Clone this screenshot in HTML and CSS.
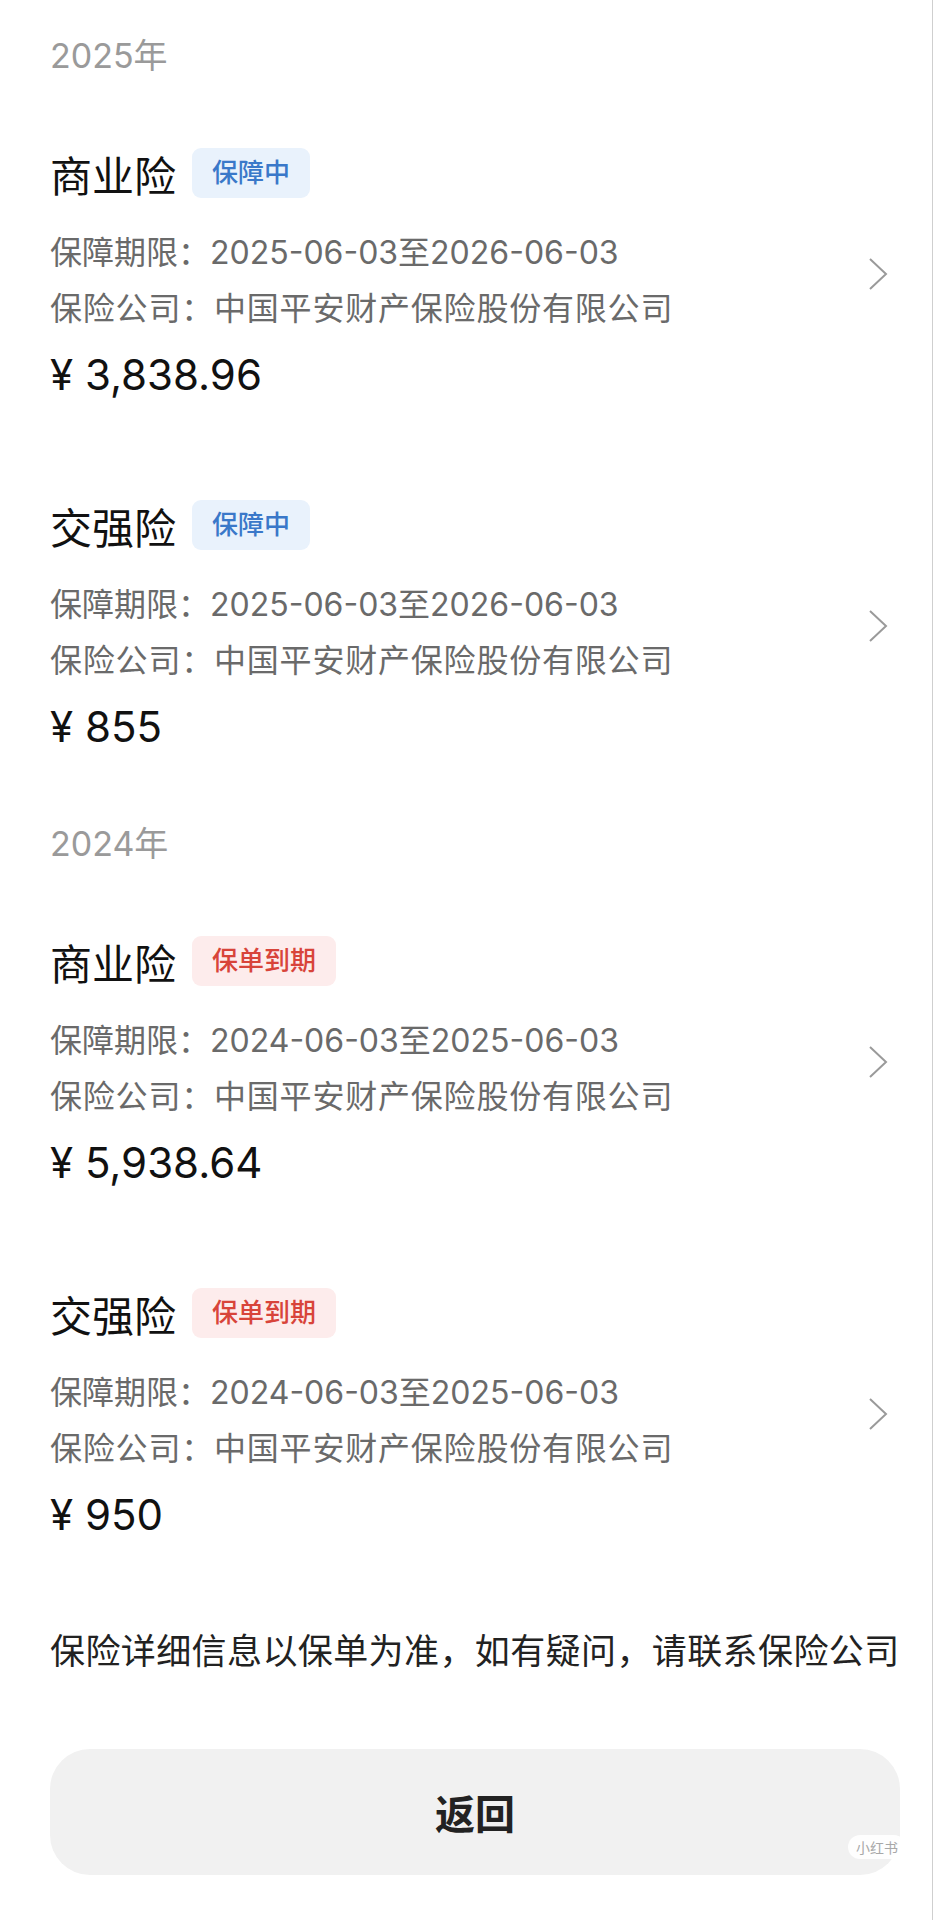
FILE: index.html
```html
<!DOCTYPE html>
<html lang="zh-CN">
<head>
  <meta charset="UTF-8">
  <meta name="viewport" content="width=device-width, initial-scale=1.0">
  <title>保单列表</title>
  <link rel="stylesheet" href="styles.css">
</head>
<body>
  <div class="page">
    <div class="year">2025年</div>

    <div class="policy">
      <div class="policy-info">
        <div class="policy-title">
          <span class="policy-name">商业险</span>
          <span class="tag tag-active">保障中</span>
        </div>
        <p class="policy-line">保障期限：2025-06-03至2026-06-03</p>
        <p class="policy-line company">保险公司：中国平安财产保险股份有限公司</p>
        <div class="policy-price">¥ 3,838.96</div>
      </div>
      <svg class="chevron" viewBox="0 0 22 36"><path d="M3 3 L19 18 L3 33" /></svg>
    </div>

    <div class="policy policy-end">
      <div class="policy-info">
        <div class="policy-title">
          <span class="policy-name">交强险</span>
          <span class="tag tag-active">保障中</span>
        </div>
        <p class="policy-line">保障期限：2025-06-03至2026-06-03</p>
        <p class="policy-line company">保险公司：中国平安财产保险股份有限公司</p>
        <div class="policy-price">¥ 855</div>
      </div>
      <svg class="chevron" viewBox="0 0 22 36"><path d="M3 3 L19 18 L3 33" /></svg>
    </div>

    <div class="year">2024年</div>

    <div class="policy">
      <div class="policy-info">
        <div class="policy-title">
          <span class="policy-name">商业险</span>
          <span class="tag tag-expired">保单到期</span>
        </div>
        <p class="policy-line">保障期限：2024-06-03至2025-06-03</p>
        <p class="policy-line company">保险公司：中国平安财产保险股份有限公司</p>
        <div class="policy-price">¥ 5,938.64</div>
      </div>
      <svg class="chevron" viewBox="0 0 22 36"><path d="M3 3 L19 18 L3 33" /></svg>
    </div>

    <div class="policy policy-last">
      <div class="policy-info">
        <div class="policy-title">
          <span class="policy-name">交强险</span>
          <span class="tag tag-expired">保单到期</span>
        </div>
        <p class="policy-line">保障期限：2024-06-03至2025-06-03</p>
        <p class="policy-line company">保险公司：中国平安财产保险股份有限公司</p>
        <div class="policy-price">¥ 950</div>
      </div>
      <svg class="chevron" viewBox="0 0 22 36"><path d="M3 3 L19 18 L3 33" /></svg>
    </div>

    <p class="notice">保险详细信息以保单为准，如有疑问，请联系保险公司</p>

    <div class="back-wrap">
      <button class="back-btn">返回</button>
      <span class="watermark">小红书</span>
    </div>
  </div>
</body>
</html>
```

FILE: styles.css
```css
body {
  margin: 0;
  background: #fff;
  font-family: "Inter", "Noto Sans CJK SC", sans-serif;
  color: #111;
}

.page {
  width: 933px;
  min-height: 1920px;
  box-sizing: border-box;
  border-right: 1px solid #cfcfcf;
  padding: 26px 33px 0 50px;
}

.year {
  height: 60px;
  line-height: 60px;
  font-size: 34px;
  color: #9a9a9a;
  margin-bottom: 57px;
}

.policy {
  display: flex;
  align-items: center;
  margin-bottom: 90px;
}

.policy-end {
  margin-bottom: 57px;
}

.policy-last {
  margin-bottom: 0;
}

.policy-info {
  flex: 1;
}

.policy-title {
  display: flex;
  align-items: center;
  height: 60px;
  margin-bottom: 22px;
}

.policy-name {
  font-size: 42px;
  color: #111;
}

.tag {
  margin-left: 16px;
  height: 50px;
  line-height: 50px;
  padding: 0 20px;
  border-radius: 9px;
  font-size: 26px;
  font-weight: 500;
}

.tag-active {
  background: #e9f2fc;
  color: #3a78c9;
}

.tag-expired {
  background: #fdecec;
  color: #d8443a;
}

.policy-line {
  margin: 0;
  height: 56px;
  line-height: 56px;
  font-size: 32px;
  color: #6a6a6a;
}

.policy-line.company {
  letter-spacing: 0.8px;
}

.policy-price {
  margin-top: 8px;
  height: 60px;
  line-height: 60px;
  font-size: 42px;
  color: #111;
}

.chevron {
  width: 22px;
  height: 36px;
  margin-right: 10px;
  fill: none;
  stroke: #9a9a9a;
  stroke-width: 2;
}

.notice {
  margin: 76px 0 0;
  height: 60px;
  line-height: 60px;
  font-size: 35px;
  color: #222;
  letter-spacing: 0.4px;
  white-space: nowrap;
}

.back-wrap {
  position: relative;
  margin-top: 68px;
}

.back-btn {
  display: block;
  width: 850px;
  height: 126px;
  border: none;
  border-radius: 40px;
  background: #f1f1f1;
  font-family: inherit;
  font-size: 40px;
  font-weight: bold;
  color: #222;
}

.watermark {
  position: absolute;
  left: 798px;
  top: 86px;
  padding: 2px 8px;
  border-radius: 12px;
  background: rgba(255, 255, 255, 0.9);
  font-size: 14px;
  color: #a8a8a8;
  white-space: nowrap;
}
```
